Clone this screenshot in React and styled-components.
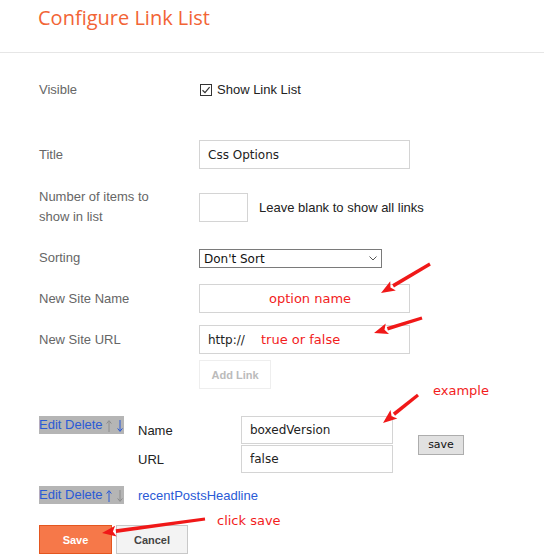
import React from 'react';
import styled, { createGlobalStyle } from 'styled-components';

const Global = createGlobalStyle`
  html, body { margin: 0; padding: 0; background: #fff; }
  body { font-family: "Liberation Sans", Arial, sans-serif; }
  * { box-sizing: border-box; }
`;

const Page = styled.div`
  position: relative;
  width: 544px;
  height: 559px;
  overflow: hidden;
  background: #fff;
`;

const Header = styled.header`
  height: 53px;
  padding: 4px 0 0 38px;
  border-bottom: 1px solid #e6e6e6;
`;

const Heading = styled.h1`
  margin: 0;
  font-family: "Open Sans", "Noto Sans", sans-serif;
  font-weight: 400;
  font-size: 20px;
  line-height: 27px;
  color: #f26435;
`;

const Form = styled.div`
  padding-left: 39px;
`;

const Row = styled.div`
  display: grid;
  grid-template-columns: 160px auto;
  align-items: center;
  justify-items: start;
  margin-top: ${(p) => p.$mt}px;
`;

const Label = styled.div`
  font-size: 13px;
  line-height: 20px;
  color: #666;
`;

const CheckLine = styled.label`
  display: flex;
  align-items: center;
  gap: 5px;
  font-size: 13px;
  line-height: 20px;
  color: #222;
`;

const CheckBox = styled.span`
  width: 12px;
  height: 12px;
  border: 1px solid #333;
  background: #fff;
  display: inline-flex;
  align-items: center;
  justify-content: center;
  margin-left: 1px;
`;

const FieldWrap = styled.div`
  position: relative;
  display: flex;
  align-items: center;
  gap: 11px;
`;

const TextInput = styled.input`
  width: ${(p) => p.$w}px;
  height: ${(p) => p.$h || 29}px;
  border: 1px solid #d4d4d4;
  padding: 0 8px;
  font-family: "DejaVu Sans", Tahoma, sans-serif;
  font-size: 12px;
  color: #222;
  background: #fff;
  outline: none;
  margin: 0;
`;

const Hint = styled.span`
  font-size: 13px;
  color: #222;
`;

const Note = styled.span`
  position: absolute;
  left: ${(p) => p.$left}px;
  top: ${(p) => p.$top}px;
  font-family: "DejaVu Sans", Verdana, sans-serif;
  font-size: 13px;
  line-height: 15px;
  color: #f21d1d;
  white-space: nowrap;
  pointer-events: none;
`;

const SelectWrap = styled.div`
  position: relative;
  width: 183px;
  height: 19px;
`;

const Select = styled.select`
  appearance: none;
  -webkit-appearance: none;
  width: 100%;
  height: 100%;
  border: 1px solid #7a7a7a;
  border-radius: 0;
  padding: 0 0 0 4px;
  font-family: "DejaVu Sans", Tahoma, sans-serif;
  font-size: 12px;
  color: #111;
  background: #fff;
  outline: none;
  margin: 0;
`;

const Chevron = styled.svg`
  position: absolute;
  right: 5px;
  top: 7px;
  pointer-events: none;
`;

const GhostButton = styled.button`
  width: 72px;
  height: 29px;
  border: 1px solid #eee;
  background: #fff;
  font-family: "Liberation Sans", Arial, sans-serif;
  font-weight: 700;
  font-size: 11px;
  color: #bbb;
  padding: 0;
`;

const LinkBlock = styled.div`
  display: grid;
  grid-template-columns: 99px 103px 152px auto;
  grid-auto-rows: ${(p) => p.$rowH}px;
  row-gap: 1px;
  align-items: center;
  justify-items: start;
  margin-top: ${(p) => p.$mt}px;
`;

const Controls = styled.div`
  align-self: start;
  display: flex;
  align-items: center;
  height: 18px;
  padding-right: 1px;
  background: #b5b5b5;
  font-size: 13px;
  line-height: 18px;
  color: #2a5ad6;
  white-space: nowrap;
  grid-row: 1;
`;

const ArrowIcon = styled.svg`
  display: block;
  flex: none;
  margin-left: ${(p) => p.$ml}px;
`;

function MoveArrow({ up, on, ml }) {
  const c = on ? '#2a5ad6' : '#8c8c8c';
  return (
    <ArrowIcon width="6" height="18" viewBox="0 0 6 18" $ml={ml}>
      {up ? (
        <>
          <path d="M3 5 V16" stroke={c} strokeWidth="1" />
          <path d="M0.6 7.6 L3 4.6 L5.4 7.6" fill="none" stroke={c} strokeWidth="1" />
        </>
      ) : (
        <>
          <path d="M3 4 V15" stroke={c} strokeWidth="1" />
          <path d="M0.6 12.4 L3 15.4 L5.4 12.4" fill="none" stroke={c} strokeWidth="1" />
        </>
      )}
    </ArrowIcon>
  );
}

const FieldLabel = styled.div`
  font-size: 13px;
  color: #222;
  grid-column: 2;
`;

const Stack = styled.div`
  grid-column: 3;
  grid-row: ${(p) => p.$row};
`;

const SmallButton = styled.button`
  grid-column: 4;
  grid-row: 1 / span 2;
  margin-left: 25px;
  width: 46px;
  height: 20px;
  background: #e1e1e1;
  border: 1px solid #adadad;
  font-family: "DejaVu Sans", Tahoma, sans-serif;
  font-size: 11px;
  color: #111;
  padding: 0;
`;

const LinkText = styled.a`
  grid-column: 2 / span 3;
  font-size: 13px;
  color: #2a5ad6;
  text-decoration: none;
  align-self: center;
`;

const Actions = styled.div`
  display: flex;
  gap: 4px;
  margin-top: ${(p) => p.$mt}px;
`;

const Button = styled.button`
  width: ${(p) => p.$w}px;
  height: 29px;
  font-family: "Liberation Sans", Arial, sans-serif;
  font-weight: 700;
  font-size: 11px;
  padding: 0;
  border: 1px solid ${(p) => (p.$primary ? '#e4561f' : '#c8c8c8')};
  background: ${(p) => (p.$primary ? '#f67849' : '#f3f3f3')};
  color: ${(p) => (p.$primary ? '#fff' : '#444')};
`;

const Overlay = styled.svg`
  position: absolute;
  left: 0;
  top: 0;
  pointer-events: none;
`;

function Arrow({ x1, y1, x2, y2 }) {
  const dx = x2 - x1;
  const dy = y2 - y1;
  const len = Math.hypot(dx, dy);
  const ux = dx / len;
  const uy = dy / len;
  const hl = 14;
  const hw = 5.5;
  const bx = x2 - ux * hl;
  const by = y2 - uy * hl;
  const px = -uy;
  const py = ux;
  return (
    <g fill="#f01818" stroke="none">
      <polygon
        points={`${x1 + px * 1.6},${y1 + py * 1.6} ${bx + px * 1.8},${by + py * 1.8} ${bx - px * 1.8},${by - py * 1.8} ${x1 - px * 1.6},${y1 - py * 1.6}`}
      />
      <polygon
        points={`${x2},${y2} ${bx + px * hw},${by + py * hw} ${bx + ux * 3},${by + uy * 3} ${bx - px * hw},${by - py * hw}`}
      />
    </g>
  );
}

export default function App() {
  return (
    <Page>
      <Global />
      <Header>
        <Heading>Configure Link List</Heading>
      </Header>
      <Form>
        <Row $mt={27}>
          <Label>Visible</Label>
          <CheckLine>
            <CheckBox>
              <svg width="10" height="10" viewBox="0 0 10 10">
                <path d="M1.5 5.2 L4 7.6 L8.6 2.2" fill="none" stroke="#333" strokeWidth="1.2" />
              </svg>
            </CheckBox>
            Show Link List
          </CheckLine>
        </Row>

        <Row $mt={40}>
          <Label>Title</Label>
          <TextInput $w={211} defaultValue="Css Options" />
        </Row>

        <Row $mt={18}>
          <Label>
            Number of items to
            <br />
            show in list
          </Label>
          <FieldWrap>
            <TextInput $w={49} />
            <Hint>Leave blank to show all links</Hint>
          </FieldWrap>
        </Row>

        <Row $mt={21}>
          <Label>Sorting</Label>
          <SelectWrap>
            <Select defaultValue="none">
              <option value="none">Don't Sort</option>
              <option value="az">Alphabetically</option>
            </Select>
            <Chevron width="8" height="5" viewBox="0 0 8 5">
              <path d="M0.5 0.5 L4 4 L7.5 0.5" fill="none" stroke="#555" strokeWidth="1" />
            </Chevron>
          </SelectWrap>
        </Row>

        <Row $mt={16}>
          <Label>New Site Name</Label>
          <FieldWrap>
            <TextInput $w={211} />
            <Note $left={70} $top={7}>option name</Note>
          </FieldWrap>
        </Row>

        <Row $mt={12}>
          <Label>New Site URL</Label>
          <FieldWrap>
            <TextInput $w={211} defaultValue="http://" />
            <Note $left={62} $top={7}>true or false</Note>
          </FieldWrap>
        </Row>

        <Row $mt={6}>
          <span />
          <GhostButton>Add Link</GhostButton>
        </Row>

        <LinkBlock $mt={27} $rowH={28}>
          <Controls>
            Edit Delete
            <MoveArrow up ml={3} />
            <MoveArrow on ml={5} />
          </Controls>
          <FieldLabel>Name</FieldLabel>
          <Stack $row={1}>
            <TextInput $w={152} $h={28} defaultValue="boxedVersion" />
          </Stack>
          <SmallButton>save</SmallButton>
          <FieldLabel>URL</FieldLabel>
          <Stack $row={2}>
            <TextInput $w={152} $h={28} defaultValue="false" />
          </Stack>
        </LinkBlock>

        <LinkBlock $mt={13} $rowH={18}>
          <Controls>
            Edit Delete
            <MoveArrow up on ml={3} />
            <MoveArrow ml={5} />
          </Controls>
          <LinkText href="#">recentPostsHeadline</LinkText>
        </LinkBlock>

        <Actions $mt={21}>
          <Button $primary $w={73}>Save</Button>
          <Button $w={72}>Cancel</Button>
        </Actions>
      </Form>

      <Note $left={433} $top={383}>example</Note>
      <Note $left={217} $top={513}>click save</Note>

      <Overlay width="544" height="559" viewBox="0 0 544 559">
        <Arrow x1={430} y1={264} x2={381} y2={293} />
        <Arrow x1={422} y1={318} x2={374} y2={333} />
        <Arrow x1={418} y1={395} x2={383} y2={423} />
        <Arrow x1={205} y1={519} x2={102} y2={533} />
      </Overlay>
    </Page>
  );
}
